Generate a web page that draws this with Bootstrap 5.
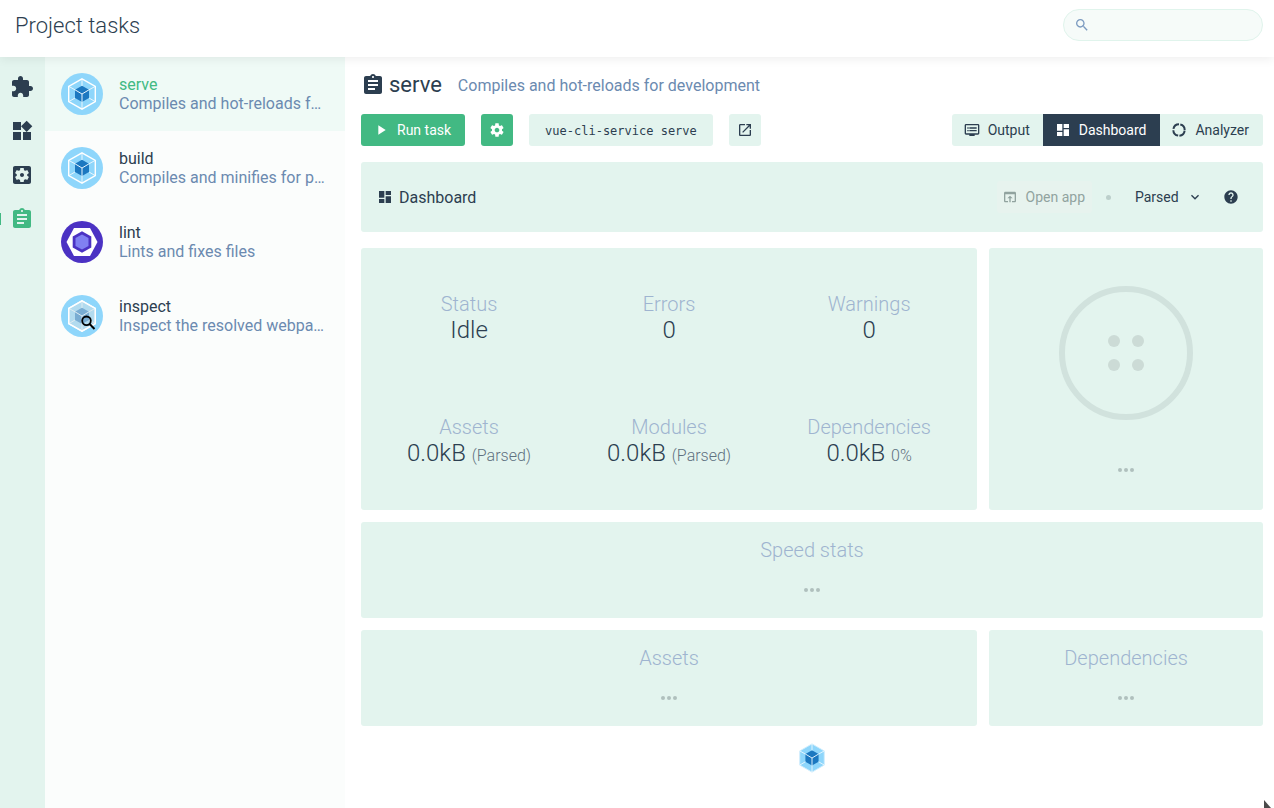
<!DOCTYPE html>
<html lang="en">
<head>
<meta charset="utf-8">
<meta name="viewport" content="width=device-width, initial-scale=1">
<title>Project tasks</title>
<link rel="stylesheet" href="https://cdn.jsdelivr.net/npm/bootstrap@5.3.0/dist/css/bootstrap.min.css">
<style>
  :root { --ink: #2c3e50; --green: #42b983; --mint: #e3f4ee; --slate: #6b8ab0; --haze: #9fb4d0; }
  body { font-family: Roboto, "Liberation Sans", sans-serif; font-size: 16px; line-height: 19px; color: var(--ink); background: #fff; }
  svg { fill: currentColor; flex: none; display: block; }
  .i16 { width: 16px; height: 16px; }
  .i24 { width: 24px; height: 24px; }
  .topbar { padding: 9px 11px 14px 15px; background: #fff; box-shadow: 0 2px 10px rgba(0,0,0,.07); z-index: 2; }
  .topbar h1 { font-size: 22px; line-height: 34px; font-weight: 300; }
  .search { width: 200px; }
  .search input { height: 32px; padding: 0 16px 0 32px; border-color: #e0f4ec; background: #f6fbf9; }
  .search svg { position: absolute; left: 11px; top: 8px; color: #7c9bc0; }
  .rail { width: 45px; background: var(--mint); padding-top: 8px; }
  .rail a { height: 44px; width: 44px; color: var(--ink); position: relative; }
  .rail a.active { color: var(--green); }
  .rail a.active::before { content: ""; position: absolute; left: 0; top: 16px; width: 1px; height: 12px; background: var(--green); }
  .tasks { width: 300px; background: #fbfdfc; }
  .task { padding: 16px; gap: 16px; color: var(--ink); }
  .task.active { background: #effaf6; }
  .task.active .task-name { color: var(--green); }
  .task svg { width: 42px; height: 42px; }
  .task-desc, .desc { color: var(--slate); }
  .work { padding: 15px 11px 16px 16px; }
  .work h2 { font-size: 22px; line-height: 26px; }
  .vbtn { height: 32px; padding: 0 14px 0 12px; gap: 8px; font-size: 14px; line-height: 16px; color: var(--ink); background: var(--mint); border: 0; border-radius: 3px; display: flex; align-items: center; }
  .vbtn:hover { color: var(--ink); background: #d5efe5; }
  .vbtn.go, .vbtn.go:hover { background: var(--green); color: #fff; }
  .vbtn.square { width: 32px; padding: 0; justify-content: center; }
  .btn-group > .vbtn.tab-btn { margin: 0; }
  .tab-btn.active { background: var(--ink) !important; color: #fff !important; border-radius: 0; }
  .cmd { height: 32px; padding: 0 16px; border-radius: 3px; background: var(--mint); color: var(--ink); font: 12px/34px "DejaVu Sans Mono", monospace; }
  .tile { background: var(--mint); border-radius: 3px; }
  .bar { height: 70px; padding: 0 24px 0 16px; }
  .bar-title { gap: 6px; }
  .vbtn.open-app { padding: 0 7px 0 5px; background: #e7f3ee; color: #91a39f; }
  .sep { width: 5px; height: 5px; margin: 0 16px 0 14px; background: #bccfcb; }
  .pick svg { position: absolute; right: 4px; top: 8px; pointer-events: none; }
  .pick select { appearance: none; border: 0; background: none; height: 32px; width: 72px; padding: 0; font-size: 14px; color: var(--ink); }
  .tiles { display: grid; grid-template-columns: 9fr 4fr; gap: 12px; }
  .wide { grid-column: 1 / -1; }
  .stats { padding: 8px; display: grid; grid-template-columns: repeat(3, 1fr); }
  .stat { height: 123px; font-weight: 300; }
  .cap { font-size: 20px; line-height: 24px; font-weight: 300; color: var(--haze); }
  .stat-value { font-size: 24px; line-height: 28px; }
  .stat-value span { font-size: 16px; line-height: 16px; color: #5f7180; }
  .panel { height: 96px; padding-top: 16px; gap: 16px; }
  .wait { color: #b0c0bd; }
  .donut { gap: 38px; padding-top: 38px; }
  .pointer { position: fixed; right: 0; bottom: 0; width: 10px; height: 8px; color: #4a4a4a; }
</style>
</head>
<body>
<svg class="d-none" aria-hidden="true">
  <symbol id="extension" viewBox="0 0 24 24"><path d="M20.5 11H19V7c0-1.1-.9-2-2-2h-4V3.500C13 2.120 11.880 1 10.500 1S8 2.120 8 3.500V5H4c-1.100 0-1.990.9-1.990 2v3.800H3.500c1.490 0 2.700 1.210 2.700 2.700s-1.210 2.700-2.700 2.700H2V20c0 1.100.9 2 2 2h3.800v-1.500c0-1.490 1.210-2.700 2.700-2.700 1.490 0 2.700 1.210 2.700 2.700V22H17c1.100 0 2-.9 2-2v-4h1.500c1.380 0 2.500-1.120 2.500-2.500S21.880 11 20.500 11z"/></symbol>
  <symbol id="widgets" viewBox="0 0 24 24"><path d="M13 13v8h8v-8h-8zM3 21h8v-8H3v8zM3 3v8h8V3H3zm13.660-1.310L11 7.340 16.660 13l5.660-5.660-5.660-5.650z"/></symbol>
  <symbol id="config" viewBox="0 0 24 24"><path d="M12 10c-1.100 0-2 .9-2 2s.9 2 2 2 2-.9 2-2-.9-2-2-2zm7-7H5c-1.110 0-2 .9-2 2v14c0 1.100.89 2 2 2h14c1.110 0 2-.9 2-2V5c0-1.100-.89-2-2-2zm-1.750 9c0 .23-.02.46-.05.68l1.480 1.160c.13.11.17.3.08.45l-1.400 2.420c-.09.15-.27.21-.43.15l-1.740-.7c-.36.28-.76.51-1.180.69l-.26 1.850c-.03.17-.18.3-.35.3h-2.800c-.17 0-.32-.13-.35-.29l-.26-1.850c-.43-.18-.82-.41-1.180-.69l-1.740.7c-.16.06-.34 0-.43-.15l-1.400-2.420c-.09-.15-.05-.34.08-.45l1.480-1.160c-.03-.23-.05-.46-.05-.69 0-.23.02-.46.05-.68l-1.480-1.160c-.13-.11-.17-.3-.08-.45l1.400-2.420c.09-.15.27-.21.43-.15l1.740.7c.36-.28.76-.51 1.180-.69l.26-1.850c.03-.17.18-.3.35-.3h2.800c.17 0 .32.13.35.29l.26 1.850c.43.18.82.41 1.180.69l1.740-.7c.16-.06.34 0 .43.15l1.400 2.420c.09.15.05.34-.08.45l-1.480 1.160c.03.23.05.46.05.69z"/></symbol>
  <symbol id="assignment" viewBox="0 0 24 24"><path d="M19 3h-4.180C14.400 1.840 13.300 1 12 1c-1.300 0-2.400.84-2.820 2H5c-1.100 0-2 .9-2 2v14c0 1.100.9 2 2 2h14c1.100 0 2-.9 2-2V5c0-1.100-.9-2-2-2zm-7 0c.55 0 1 .45 1 1s-.45 1-1 1-1-.45-1-1 .45-1 1-1zm2 14H7v-2h7v2zm3-4H7v-2h10v2zm0-4H7V7h10v2z"/></symbol>
  <symbol id="gear" viewBox="0 0 24 24"><path d="M19.430 12.980c.04-.32.07-.64.07-.98s-.03-.66-.07-.98l2.110-1.650c.19-.15.24-.42.12-.64l-2-3.460c-.12-.22-.39-.3-.61-.22l-2.490 1c-.52-.4-1.080-.73-1.690-.98l-.38-2.650C14.460 2.180 14.250 2 14 2h-4c-.25 0-.46.18-.49.42l-.38 2.650c-.61.25-1.170.59-1.690.98l-2.490-1c-.23-.09-.49 0-.61.22l-2 3.460c-.13.22-.07.49.12.64l2.110 1.650c-.04.32-.07.65-.07.98s.03.66.07.98l-2.110 1.650c-.19.15-.24.42-.12.64l2 3.460c.12.22.39.3.61.22l2.490-1c.52.4 1.080.73 1.690.98l.38 2.650c.03.24.24.42.49.42h4c.25 0 .46-.18.49-.42l.38-2.650c.61-.25 1.170-.59 1.690-.98l2.490 1c.23.09.49 0 .61-.22l2-3.460c.12-.22.07-.49-.12-.64l-2.110-1.650zM12 15.500c-1.930 0-3.500-1.570-3.500-3.500s1.570-3.500 3.500-3.500 3.500 1.570 3.500 3.500-1.570 3.500-3.500 3.500z"/></symbol>
  <symbol id="launch" viewBox="0 0 24 24"><path d="M19 19H5V5h7V3H5c-1.110 0-2 .9-2 2v14c0 1.100.89 2 2 2h14c1.100 0 2-.9 2-2v-7h-2v7zM14 3v2h3.590l-9.830 9.830 1.410 1.410L19 6.410V10h2V3h-7z"/></symbol>
  <symbol id="dvr" viewBox="0 0 24 24"><path d="M21 3H3c-1.100 0-2 .9-2 2v12c0 1.100.9 2 2 2h5v2h8v-2h5c1.100 0 1.990-.9 1.990-2L23 5c0-1.100-.9-2-2-2zm0 14H3V5h18v12zm-2-9H8v2h11V8zm0 4H8v2h11v-2zM7 8H5v2h2V8zm0 4H5v2h2v-2z"/></symbol>
  <symbol id="dashboard" viewBox="0 0 24 24"><path d="M3 13h8V3H3v10zm0 8h8v-6H3v6zm10 0h8V11h-8v10zm0-18v6h8V3h-8z"/></symbol>
  <symbol id="donut" viewBox="0 0 24 24"><circle cx="12" cy="12" r="8.500" fill="none" stroke="currentColor" stroke-width="3" stroke-dasharray="11.350 2" stroke-dashoffset="-1"/></symbol>
  <symbol id="browser" viewBox="0 0 24 24"><path d="M19 4H5c-1.110 0-2 .9-2 2v12c0 1.100.89 2 2 2h4v-2H5V8h14v10h-4v2h4c1.100 0 2-.9 2-2V6c0-1.100-.89-2-2-2zm-7 6l-4 4h3v6h2v-6h3l-4-4z"/></symbol>
  <symbol id="chevron" viewBox="0 0 24 24"><path d="M16.590 8.590L12 13.170 7.410 8.590 6 10l6 6 6-6z"/></symbol>
  <symbol id="help" viewBox="0 0 24 24"><path d="M12 2C6.480 2 2 6.480 2 12s4.480 10 10 10 10-4.480 10-10S17.520 2 12 2zm1 17h-2v-2h2v2zm2.070-7.750l-.9.92C13.450 12.900 13 13.500 13 15h-2v-.5c0-1.100.45-2.100 1.170-2.830l1.240-1.260c.37-.36.59-.86.59-1.410 0-1.100-.9-2-2-2s-2 .9-2 2H8c0-2.210 1.790-4 4-4s4 1.790 4 4c0 .88-.36 1.680-.93 2.250z"/></symbol>
  <symbol id="search" viewBox="0 0 24 24"><path d="M15.500 14h-.79l-.28-.27C15.410 12.590 16 11.110 16 9.500 16 5.910 13.090 3 9.500 3S3 5.910 3 9.500 5.910 16 9.500 16c1.610 0 3.090-.59 4.230-1.570l.27.28v.79l5 4.990L20.490 19l-4.990-5zm-6 0C7.010 14 5 11.990 5 9.500S7.010 5 9.500 5 14 7.010 14 9.500 11.990 14 9.500 14z"/></symbol>
  <symbol id="more" viewBox="0 0 24 24"><circle cx="6" cy="12" r="2"/><circle cx="12" cy="12" r="2"/><circle cx="18" cy="12" r="2"/></symbol>
  <symbol id="cube" viewBox="-21 -21 42 42">
    <path fill="#1c78c0" d="M0-8.200L7-4.200V4L0 8 -7 4V-4.200z"/>
    <path fill="none" stroke="#e8f6fe" stroke-width="1" d="M0-8V-15M0 8V15M-7-4.200L-13-7.500M7-4.200L13-7.500M-7 4L-13 7.500M7 4L13 7.500M0 0V8M0 0L-7-4.200M0 0L7-4.200"/>
  </symbol>
  <symbol id="webpack" viewBox="-21 -21 42 42">
    <circle r="21" fill="#8ed6fb"/>
    <use href="#cube" x="-21" y="-21" width="42" height="42"/>
    <path fill="none" stroke="#fff" stroke-width="1.400" d="M0-15.200L13.300-7.600V7.600L0 15.200 -13.300 7.600V-7.600z"/>
  </symbol>
</svg>

<div class="d-flex flex-column min-vh-100">
  <header class="topbar d-flex justify-content-between position-relative">
    <h1 class="m-0">Project tasks</h1>
    <div class="search position-relative">
      <input type="search" class="form-control rounded-pill" aria-label="Search tasks">
      <svg class="i16"><use href="#search"/></svg>
    </div>
  </header>

  <div class="d-flex flex-grow-1">
    <nav class="rail flex-shrink-0" aria-label="Project">
      <a href="#" class="d-flex align-items-center justify-content-center" aria-label="Plugins"><svg class="i24"><use href="#extension"/></svg></a>
      <a href="#" class="d-flex align-items-center justify-content-center" aria-label="Dependencies"><svg class="i24"><use href="#widgets"/></svg></a>
      <a href="#" class="d-flex align-items-center justify-content-center" aria-label="Configuration"><svg class="i24"><use href="#config"/></svg></a>
      <a href="#" class="active d-flex align-items-center justify-content-center" aria-label="Tasks"><svg class="i24"><use href="#assignment"/></svg></a>
    </nav>

    <nav class="tasks flex-shrink-0" aria-label="Tasks">
      <a href="#" class="task active d-flex align-items-center text-decoration-none">
        <svg><use href="#webpack"/></svg>
        <div class="overflow-hidden"><div class="task-name">serve</div><div class="task-desc text-truncate">Compiles and hot-reloads for development</div></div>
      </a>
      <a href="#" class="task d-flex align-items-center text-decoration-none">
        <svg><use href="#webpack"/></svg>
        <div class="overflow-hidden"><div class="task-name">build</div><div class="task-desc text-truncate">Compiles and minifies for production</div></div>
      </a>
      <a href="#" class="task d-flex align-items-center text-decoration-none">
        <svg viewBox="-21 -21 42 42">
          <circle r="21" fill="#4b32c3"/>
          <path fill="#fff" d="M-15.500 0L-8-14H8L15.500 0 8 14H-8z"/>
          <path fill="#4b32c3" d="M0-10.800L9.300-5.500V5.500L0 10.800 -9.300 5.500V-5.500z"/>
          <path fill="#8080f2" d="M0-7.600L6.500-3.900V3.900L0 7.600 -6.500 3.900V-3.900z"/>
        </svg>
        <div class="overflow-hidden"><div class="task-name">lint</div><div class="task-desc text-truncate">Lints and fixes files</div></div>
      </a>
      <a href="#" class="task d-flex align-items-center text-decoration-none">
        <svg viewBox="-21 -21 42 42">
          <use href="#webpack" x="-21" y="-21" width="42" height="42"/>
          <path fill="#d5dfe4" fill-opacity=".5" stroke="#fff" stroke-width="1.400" d="M0-15.200L13.300-7.600V7.600L0 15.200 -13.300 7.600V-7.600z"/>
          <circle cx="4.500" cy="4.800" r="4.300" fill="none" stroke="#000" stroke-width="1.800"/>
          <path stroke="#000" stroke-width="2" d="M7.600 8L12.500 13"/>
        </svg>
        <div class="overflow-hidden"><div class="task-name">inspect</div><div class="task-desc text-truncate">Inspect the resolved webpack config</div></div>
      </a>
    </nav>

    <main class="work flex-grow-1">
      <div class="d-flex align-items-center">
        <svg class="i24"><use href="#assignment"/></svg>
        <h2 class="m-0 ms-1 me-3 fw-normal">serve</h2>
        <span class="desc">Compiles and hot-reloads for development</span>
      </div>

      <div class="d-flex justify-content-between my-3">
        <div class="d-flex gap-3">
          <button type="button" class="btn vbtn go"><svg class="i16" viewBox="0 0 24 24"><path d="M8 5v14l11-7z"/></svg>Run task</button>
          <button type="button" class="btn vbtn go square" aria-label="Task settings"><svg class="i16"><use href="#gear"/></svg></button>
          <div class="cmd">vue-cli-service serve</div>
          <a href="#" class="btn vbtn square" aria-label="More info"><svg class="i16"><use href="#launch"/></svg></a>
        </div>
        <div class="btn-group">
          <button type="button" class="btn vbtn tab-btn"><svg class="i16"><use href="#dvr"/></svg>Output</button>
          <button type="button" class="btn vbtn tab-btn active"><svg class="i16"><use href="#dashboard"/></svg>Dashboard</button>
          <button type="button" class="btn vbtn tab-btn"><svg class="i16"><use href="#donut"/></svg>Analyzer</button>
        </div>
      </div>

      <div class="tile bar d-flex align-items-center mb-3">
        <div class="bar-title d-flex align-items-center me-auto"><svg class="i16"><use href="#dashboard"/></svg>Dashboard</div>
        <button type="button" class="btn vbtn open-app opacity-100" disabled><svg class="i16"><use href="#browser"/></svg>Open app</button>
        <span class="sep rounded-circle"></span>
        <div class="pick position-relative ms-2 me-3">
          <select aria-label="Size shown"><option>Stats</option><option selected>Parsed</option><option>Gzip</option></select>
          <svg class="i16"><use href="#chevron"/></svg>
        </div>
        <svg class="i16" role="img" aria-label="Help"><use href="#help"/></svg>
      </div>

      <div class="tiles text-center">
        <section class="tile stats">
          <div class="stat d-flex flex-column justify-content-center"><div class="cap">Status</div><div class="stat-value">Idle</div></div>
          <div class="stat d-flex flex-column justify-content-center"><div class="cap">Errors</div><div class="stat-value">0</div></div>
          <div class="stat d-flex flex-column justify-content-center"><div class="cap">Warnings</div><div class="stat-value">0</div></div>
          <div class="stat d-flex flex-column justify-content-center"><div class="cap">Assets</div><div class="stat-value">0.0kB <span>(Parsed)</span></div></div>
          <div class="stat d-flex flex-column justify-content-center"><div class="cap">Modules</div><div class="stat-value">0.0kB <span>(Parsed)</span></div></div>
          <div class="stat d-flex flex-column justify-content-center"><div class="cap">Dependencies</div><div class="stat-value">0.0kB <span>0%</span></div></div>
        </section>
        <section class="tile donut d-flex flex-column align-items-center">
          <svg width="134" height="134" viewBox="-67 -67 134 134">
            <circle r="64" fill="none" stroke="#d1e2dd" stroke-width="6"/>
            <g fill="#ccdbd6"><circle cx="-12" cy="-12" r="6"/><circle cx="12" cy="-12" r="6"/><circle cx="-12" cy="12" r="6"/><circle cx="12" cy="12" r="6"/></g>
          </svg>
          <svg class="i24 wait"><use href="#more"/></svg>
        </section>
        <section class="tile wide panel d-flex flex-column align-items-center"><div class="cap">Speed stats</div><svg class="i24 wait"><use href="#more"/></svg></section>
        <section class="tile panel d-flex flex-column align-items-center"><div class="cap">Assets</div><svg class="i24 wait"><use href="#more"/></svg></section>
        <section class="tile panel d-flex flex-column align-items-center"><div class="cap">Dependencies</div><svg class="i24 wait"><use href="#more"/></svg></section>
      </div>

      <div class="d-flex justify-content-center mt-3">
        <svg width="32" height="32" viewBox="-17 -17 34 34">
          <path fill="#8ed6fb" stroke="#cdecfc" stroke-width="1" d="M0-15L13-7.500V7.500L0 15 -13 7.500V-7.500z"/>
          <use href="#cube" x="-21" y="-21" width="42" height="42"/>
        </svg>
      </div>
    </main>
  </div>
</div>
<svg class="pointer" viewBox="0 0 10 8" aria-hidden="true"><path d="M0 0L7 8H0z"/></svg>
<script src="https://cdn.jsdelivr.net/npm/bootstrap@5.3.0/dist/js/bootstrap.bundle.min.js"></script>
</body>
</html>
